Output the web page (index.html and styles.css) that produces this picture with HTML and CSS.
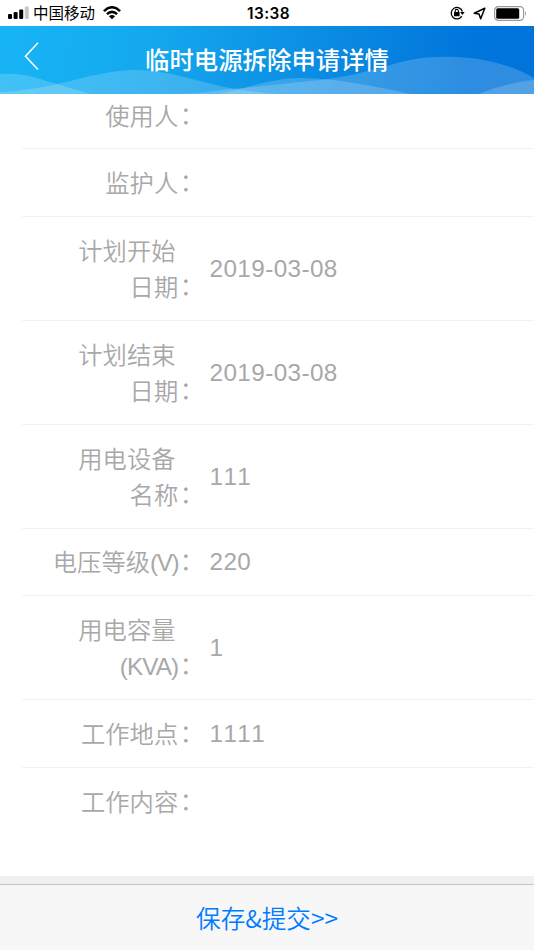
FILE: index.html
```html
<!DOCTYPE html>
<html lang="zh-CN">
<head>
<meta charset="utf-8">
<title>临时电源拆除申请详情</title>
<link rel="stylesheet" href="styles.css">
</head>
<body>
<div class="status">
  <div class="status-left">
    <svg class="signal" width="21" height="14" viewBox="0 0 21 14"><rect x="0" y="8" width="4" height="5" rx="1"/><rect x="5.6" y="6" width="4" height="7" rx="1"/><rect x="11.2" y="3.4" width="4" height="9.6" rx="1"/><rect x="16.8" y="0.5" width="4" height="12.5" rx="1" fill="#c8c8c8"/></svg>
    <span class="carrier">中国移动</span>
    <svg class="wifi" width="18" height="14" viewBox="0 0 18 14"><g fill="none" stroke="#000" stroke-width="2.5"><path d="M.9 5.1Q9-2.6 17.1 5.1"/><path d="M3.9 8.2Q9 3.5 14.1 8.2"/></g><path d="M5.9 10.2Q9 7.8 12.1 10.2L9 13.3z"/></svg>
  </div>
  <time class="clock">13:38</time>
  <div class="status-right">
    <svg width="15" height="14" viewBox="0 0 15 14"><path d="M11.8 10.2A5.7 5.7 0 1 1 12.4 5.5" fill="none" stroke="#000" stroke-width="1.3"/><path d="M10.1 6h4.6l-2.3 3z"/><rect x="4" y="6" width="5.6" height="4.3" rx=".5"/><path d="M5.2 6.3V5a1.6 1.6 0 0 1 3.2 0v1.3" fill="none" stroke="#000" stroke-width="1.1"/></svg>
    <svg class="arrow" width="13" height="13" viewBox="0 0 13 13"><path d="M11.8 1.3L1.2 6.2l4.8.7 1.7 4.9z" fill="none" stroke="#000" stroke-width="1.5" stroke-linejoin="round"/></svg>
    <svg class="battery" width="33" height="15" viewBox="0 0 33 15"><rect x=".6" y=".7" width="29" height="13.6" rx="3.6" fill="none" stroke="#999" stroke-width="1.2"/><rect x="2.2" y="2.3" width="23" height="10.4" rx="1.5"/><path d="M31 5q2 2.5 0 5z" fill="#999"/></svg>
  </div>
</div>
<header class="header">
  <svg class="waves" width="534" height="68" viewBox="0 0 534 68">
    <g fill="#fff" fill-opacity=".18">
      <path d="M0 48C25 46 40 53 57 58C72 63 82 65 91 68H0z"/>
      <path d="M0 66C20 65 40 62 62 57C90 50 112 44 136 44C167 44 195 55 230 62C246 65 262 67 278 68H0z"/>
      <path d="M218 68C245 63 270 52 301 52C338 52 376 61 411 68z"/>
      <path d="M230 63C258 61 282 58 310 55C370 50 400 31 437 31C477 29 512 39 534 52V68H180C204 67 214 65 230 63z"/>
      <path d="M478 68C498 60 516 56 534 54V68z"/>
    </g>
  </svg>
  <svg class="back" width="16" height="30" viewBox="0 0 16 30"><path d="M14 1.8L1.5 15.3L14 28.5" fill="none" stroke="#fff" stroke-width="1.6"/></svg>
  <h1 class="title">临时电源拆除申请详情</h1>
</header>
<main class="list">
  <div class="row row-first"><div class="label">使用人<span class="colon">：</span></div></div>
  <div class="row"><div class="label">监护人<span class="colon">：</span></div></div>
  <div class="row tall"><div class="label"><span class="lead">计划开始</span>日期<span class="colon">：</span></div><div class="value">2019-03-08</div></div>
  <div class="row tall"><div class="label"><span class="lead">计划结束</span>日期<span class="colon">：</span></div><div class="value">2019-03-08</div></div>
  <div class="row tall"><div class="label"><span class="lead">用电设备</span>名称<span class="colon">：</span></div><div class="value">111</div></div>
  <div class="row short"><div class="label">电压等级<span class="unit unit-v">(V)</span><span class="colon">：</span></div><div class="value">220</div></div>
  <div class="row tall"><div class="label"><span class="lead">用电容量</span><span class="unit">(KVA)</span><span class="colon">：</span></div><div class="value">1</div></div>
  <div class="row"><div class="label">工作地点<span class="colon">：</span></div><div class="value">1111</div></div>
  <div class="row row-last"><div class="label">工作内容<span class="colon">：</span></div></div>
</main>
<footer class="toolbar"><a class="submit">保存&amp;提交&gt;&gt;</a></footer>
</body>
</html>
```
FILE: styles.css
```css
* { box-sizing: border-box; }
body {
  margin: 0;
  height: 950px;
  display: flex;
  flex-direction: column;
  overflow: hidden;
  background: #efeff4;
  font-family: "Liberation Sans", "Noto Sans CJK SC", sans-serif;
}
svg { display: block; flex: none; }
.status {
  height: 26px;
  flex: none;
  display: grid;
  grid-template-columns: 1fr auto 1fr;
  align-items: center;
  padding: 0 7px 0 10px;
  background: #fff;
  color: #000;
}
.status-left, .status-right { display: flex; align-items: center; }
.status-left { margin-left: -2px; }
.status-right { justify-content: flex-end; }
.carrier { margin: 0 8px 0 4px; padding-top: 2px; font-size: 15.5px; line-height: 24px; }
.clock { padding-top: 2px; font: 600 15.4px/24px Inter, sans-serif; letter-spacing: .45px; }
.arrow { margin: 0 8px; }
.header {
  position: relative;
  height: 68px;
  flex: none;
  display: flex;
  align-items: center;
  justify-content: center;
  background: linear-gradient(100deg, #18b5f5 0%, #14a8ee 28%, #0a8ae2 62%, #0075db 88%, #0074da 100%);
}
.waves { position: absolute; left: 0; top: 0; }
.back { position: absolute; left: 24px; top: 15px; }
.title {
  position: relative;
  margin: 0;
  padding-top: 2px;
  font-size: 24.4px;
  font-weight: 500;
  line-height: 66px;
  color: #fff;
}
.list { flex: none; background: #fff; padding-left: 22px; }
.row {
  height: 68px;
  display: flex;
  align-items: center;
  border-bottom: 1px solid #f2f2f2;
  color: #a8a8a8;
  font-size: 24.3px;
  line-height: 36px;
}
.tall { height: 104px; }
.short { height: 67px; }
.row-first { height: 55px; padding-bottom: 11px; }
.row-last { height: 108px; padding-bottom: 40px; border-bottom: 0; }
.label { width: 180.5px; flex: none; padding-top: 2px; text-align: right; font-weight: 350; }
.lead { display: block; padding-right: 27px; }
.colon { padding-left: 1.5px; margin-right: -1.5px; vertical-align: 1px; line-height: 1; }
.unit { letter-spacing: -.9px; }
.unit-v { letter-spacing: -1.4px; }
.value { margin-left: 7px; letter-spacing: .4px; font-kerning: none; }
.toolbar {
  margin-top: 8px;
  flex: 1;
  display: flex;
  align-items: center;
  justify-content: center;
  padding-bottom: 2px;
  border-top: 1px solid #c5c5c8;
  background: #f7f7f7;
}
.submit { color: #007aff; font-family: "Noto Sans CJK SC", sans-serif; font-size: 24.6px; line-height: 36px; font-weight: 350; }
```
